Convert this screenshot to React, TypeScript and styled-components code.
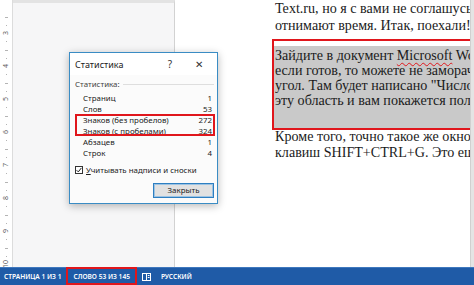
import React from "react";
import styled, { createGlobalStyle } from "styled-components";

const GlobalStyle = createGlobalStyle`
  html, body {
    margin: 0;
    padding: 0;
  }
  body {
    width: 474px;
    height: 285px;
    overflow: hidden;
    background: #fff;
  }
`;

const Screen = styled.div`
  position: relative;
  width: 474px;
  height: 285px;
  display: flex;
  flex-direction: column;
  overflow: hidden;
  font-family: "Noto Sans", "Open Sans", sans-serif;
`;

const Workspace = styled.div`
  flex: 1;
  display: flex;
  min-height: 0;
`;

const Ruler = styled.div`
  width: 13px;
  box-sizing: border-box;
  background: #fff;
  border-right: 1px solid #dcdcdc;
  padding-top: 16.5px;
  overflow: hidden;
`;

const RulerCell = styled.div`
  height: 33px;
  display: grid;
  grid-template-rows: repeat(4, 8.25px);
  justify-items: center;
`;

const Tick = styled.div<{ $w: number }>`
  width: ${(p) => p.$w}px;
  height: 1px;
  background: #b4b4b4;
`;

const RulerNum = styled.div`
  font-size: 7px;
  line-height: 8px;
  height: 8px;
  color: #5f5f5f;
  transform: translateY(-50%) rotate(-90deg);
`;

const LeftPane = styled.div`
  width: 162px;
  box-sizing: border-box;
  background: #f6f6f7;
  border-top: 3px solid #e3e3e3;
  border-right: 1px solid #d2d2d2;
`;

const DocPane = styled.div`
  flex: 1;
  overflow: hidden;
  padding-left: 97px;
  font-family: "Liberation Serif", "Times New Roman", serif;
  font-size: 14.1px;
  color: #1b1b1b;
`;

const ScrollStrip = styled.div`
  width: 3px;
  background: #e4e4e4;
  border-left: 1px solid #d0d0d0;
`;

const Line = styled.div<{ $h?: number }>`
  white-space: nowrap;
  line-height: ${(p) => p.$h ?? 16}px;
  padding-left: 3px;
`;

const Top = styled.div`
  margin-bottom: 5px;
`;

const Selection = styled.div`
  width: 400px;
  border: 2px solid #e0161c;
  padding-top: 5px;
  background: #fff;
`;

const Highlight = styled.div`
  background: #c9c9c9;
  padding: 2px 0 20px;
  ${Line} {
    padding-left: 1px;
  }
`;

const Squiggle = styled.span`
  text-decoration: underline wavy #e0161c;
  text-decoration-thickness: 1px;
  text-underline-offset: 2px;
`;

const After = styled.div`
  margin-top: -2px;
`;

const StatusBar = styled.div`
  height: 18px;
  flex: none;
  background: #1f5ba7;
  border-top: 1px solid #3f78be;
  box-sizing: border-box;
  display: flex;
  align-items: stretch;
  color: #fff;
  font-size: 6.6px;
  font-weight: 600;
`;

const StatusItem = styled.div<{ $boxed?: boolean }>`
  display: flex;
  align-items: center;
  padding: 0 5px;
  box-sizing: border-box;
  ${(p) => (p.$boxed ? "border: 2px solid #e0161c; margin-top: -1px; padding: 0 5px;" : "")}
`;

const Dialog = styled.div`
  position: absolute;
  left: 69px;
  top: 52px;
  width: 149px;
  height: 152px;
  box-sizing: border-box;
  background: #fbfbfb;
  border: 1px solid #3a8cc4;
  box-shadow: 0 2px 8px rgba(0, 0, 0, 0.28);
  display: flex;
  flex-direction: column;
  color: #1c1c1c;
  font-size: 7.9px;
`;

const TitleBar = styled.div`
  height: 22px;
  display: flex;
  align-items: center;
  padding-left: 5px;
  background: #fff;
`;

const Title = styled.div`
  flex: 1;
  font-size: 9px;
`;

const TitleButton = styled.div<{ $w: number }>`
  width: ${(p) => p.$w}px;
  text-align: center;
  font-size: 10px;
  color: #333;
`;

const GroupLabel = styled.div`
  margin: 3px 3px 2px 5px;
  height: 12px;
  display: flex;
  align-items: center;
  gap: 3px;
  color: #444;
  &::after {
    content: "";
    flex: 1;
    height: 1px;
    background: #dedede;
  }
`;

const Rows = styled.div`
  margin: 0 2px 0 5px;
`;

const Row = styled.div`
  height: 11px;
  display: flex;
  align-items: center;
  justify-content: space-between;
  padding: 0 3px 0 8px;
`;

const Marked = styled.div`
  outline: 2px solid #e0161c;
  outline-offset: -2px;
`;

const CheckRow = styled.div`
  margin: 5.5px 0 0 5px;
  height: 12px;
  display: flex;
  align-items: center;
  gap: 3px;
`;

const CheckBox = styled.div`
  width: 8px;
  height: 8px;
  box-sizing: border-box;
  border: 1px solid #333;
  background: #fff;
  display: flex;
  align-items: center;
  justify-content: center;
`;

const Accel = styled.span`
  text-decoration: underline;
`;

const ButtonRow = styled.div`
  margin-top: 7px;
  display: flex;
  justify-content: flex-end;
  padding-right: 3px;
`;

const Button = styled.div`
  width: 61px;
  height: 15px;
  box-sizing: border-box;
  border: 1px solid #2e7fc1;
  box-shadow: inset 0 0 0 1px #9cc3e3;
  background: #e1e1e1;
  display: flex;
  align-items: center;
  justify-content: center;
`;

const stats = [
  ["Страниц", "1"],
  ["Слов", "53"],
  ["Знаков (без пробелов)", "272"],
  ["Знаков (с пробелами)", "324"],
  ["Абзацев", "1"],
  ["Строк", "4"],
];

function ReadModeIcon() {
  return (
    <svg width="9" height="8" viewBox="0 0 9 8" fill="none" stroke="#fff" strokeWidth="1">
      <rect x="0.5" y="0.5" width="8" height="7" />
      <line x1="4.5" y1="0.5" x2="4.5" y2="7.5" />
      <line x1="5.8" y1="2.5" x2="7.5" y2="2.5" />
      <line x1="5.8" y1="4.5" x2="7.5" y2="4.5" />
    </svg>
  );
}

export default function App() {
  const rulerNums = ["3", "4", "5", "6", "7", "8", "9", "10"];
  const row = (s: string[]) => (
    <Row key={s[0]}>
      <span>{s[0]}</span>
      <span>{s[1]}</span>
    </Row>
  );

  return (
    <Screen>
      <GlobalStyle />
      <Workspace>
        <Ruler>
          {rulerNums.map((n) => (
            <RulerCell key={n}>
              <Tick $w={3} />
              <Tick $w={1} />
              <RulerNum>{n}</RulerNum>
              <Tick $w={1} />
            </RulerCell>
          ))}
        </Ruler>
        <LeftPane />
        <DocPane>
          <Top>
            <Line $h={17}>Text.ru, но я с вами не соглашусь, ведь они</Line>
            <Line $h={17}>отнимают время. Итак, поехали!</Line>
          </Top>
          <Selection>
            <Highlight>
              <Line $h={15}>
                Зайдите в документ <Squiggle>Microsoft</Squiggle> Word
              </Line>
              <Line $h={15}>если готов, то можете не заморачиваться</Line>
              <Line $h={15}>угол. Там будет написано "Число слов"</Line>
              <Line $h={15}>эту область и вам покажется полное</Line>
            </Highlight>
          </Selection>
          <After>
            <Line>Кроме того, точно такое же окно можно</Line>
            <Line>клавиш SHIFT+CTRL+G. Это ещё проще</Line>
          </After>
        </DocPane>
        <ScrollStrip />
      </Workspace>
      <StatusBar>
        <StatusItem style={{ paddingLeft: 4 }}>СТРАНИЦА 1 ИЗ 1</StatusItem>
        <StatusItem $boxed>СЛОВО 53 ИЗ 145</StatusItem>
        <StatusItem>
          <ReadModeIcon />
        </StatusItem>
        <StatusItem>РУССКИЙ</StatusItem>
      </StatusBar>

      <Dialog>
        <TitleBar>
          <Title>Статистика</Title>
          <TitleButton $w={22}>?</TitleButton>
          <TitleButton $w={36}>✕</TitleButton>
        </TitleBar>
        <GroupLabel>Статистика:</GroupLabel>
        <Rows>
          {stats.slice(0, 2).map(row)}
          <Marked>{stats.slice(2, 4).map(row)}</Marked>
          {stats.slice(4).map(row)}
        </Rows>
        <CheckRow>
          <CheckBox>
            <svg width="6" height="6" viewBox="0 0 6 6" fill="none" stroke="#222" strokeWidth="1">
              <polyline points="0.6,3.2 2.3,4.9 5.4,0.9" />
            </svg>
          </CheckBox>
          <span>
            <Accel>У</Accel>читывать надписи и сноски
          </span>
        </CheckRow>
        <ButtonRow>
          <Button>Закрыть</Button>
        </ButtonRow>
      </Dialog>
    </Screen>
  );
}
